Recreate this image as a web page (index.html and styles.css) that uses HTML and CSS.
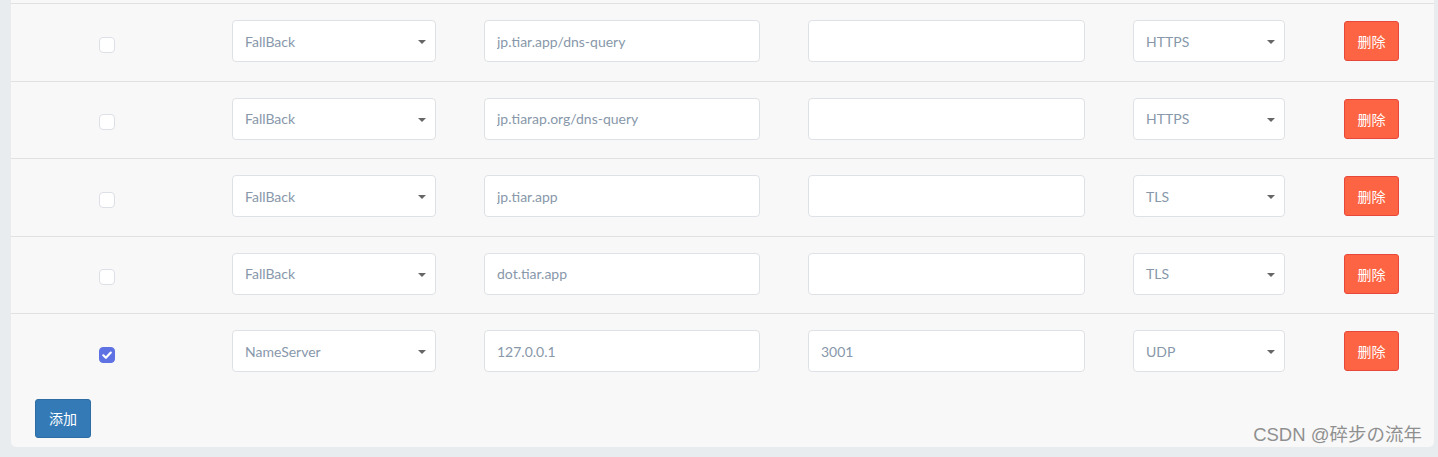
FILE: index.html
```html
<!DOCTYPE html>
<html lang="zh-CN">
<head>
<meta charset="utf-8">
<title>DNS</title>
<link rel="stylesheet" href="styles.css">
</head>
<body>
<div class="card">
  <div class="row">
    <div class="cell cell-check"><span class="check"></span></div>
    <div class="cell"><div class="select"><span>FallBack</span></div></div>
    <div class="cell"><input class="field" type="text" value="jp.tiar.app/dns-query"></div>
    <div class="cell"><input class="field" type="text" value=""></div>
    <div class="cell"><div class="select"><span>HTTPS</span></div></div>
    <div class="cell cell-btn"><button class="btn-del">删除</button></div>
  </div>
  <div class="row">
    <div class="cell cell-check"><span class="check"></span></div>
    <div class="cell"><div class="select"><span>FallBack</span></div></div>
    <div class="cell"><input class="field" type="text" value="jp.tiarap.org/dns-query"></div>
    <div class="cell"><input class="field" type="text" value=""></div>
    <div class="cell"><div class="select"><span>HTTPS</span></div></div>
    <div class="cell cell-btn"><button class="btn-del">删除</button></div>
  </div>
  <div class="row">
    <div class="cell cell-check"><span class="check"></span></div>
    <div class="cell"><div class="select"><span>FallBack</span></div></div>
    <div class="cell"><input class="field" type="text" value="jp.tiar.app"></div>
    <div class="cell"><input class="field" type="text" value=""></div>
    <div class="cell"><div class="select"><span>TLS</span></div></div>
    <div class="cell cell-btn"><button class="btn-del">删除</button></div>
  </div>
  <div class="row">
    <div class="cell cell-check"><span class="check"></span></div>
    <div class="cell"><div class="select"><span>FallBack</span></div></div>
    <div class="cell"><input class="field" type="text" value="dot.tiar.app"></div>
    <div class="cell"><input class="field" type="text" value=""></div>
    <div class="cell"><div class="select"><span>TLS</span></div></div>
    <div class="cell cell-btn"><button class="btn-del">删除</button></div>
  </div>
  <div class="row">
    <div class="cell cell-check"><span class="check checked"><svg viewBox="0 0 16 16" width="16" height="16"><path d="M4.3 8.3 L6.9 10.8 L11.8 5.6" fill="none" stroke="#fff" stroke-width="2.2" stroke-linecap="round" stroke-linejoin="round"/></svg></span></div>
    <div class="cell"><div class="select"><span>NameServer</span></div></div>
    <div class="cell"><input class="field" type="text" value="127.0.0.1"></div>
    <div class="cell"><input class="field" type="text" value="3001"></div>
    <div class="cell"><div class="select"><span>UDP</span></div></div>
    <div class="cell cell-btn"><button class="btn-del">删除</button></div>
  </div>
  <div class="footer">
    <button class="btn-add">添加</button>
  </div>
</div>
<div class="watermark">CSDN @碎步の流年</div>
</body>
</html>
```

FILE: styles.css
```css
html, body {
  margin: 0;
  padding: 0;
}
body {
  background: #e9ecef;
  width: 1438px;
  height: 457px;
  overflow: hidden;
  position: relative;
  font-family: "Lato", "Noto Sans CJK SC", sans-serif;
}
.card {
  margin-left: 11px;
  width: 1423px;
  background: #f8f8f8;
  padding-top: 3px;
  padding-bottom: 9px;
  border-radius: 0 0 5px 5px;
  box-sizing: border-box;
}
.row {
  display: grid;
  grid-template-columns: 197px 252px 324px 325px 200px 125px;
  height: 77.5px;
  box-sizing: border-box;
  border-top: 1px solid #e1e1e1;
  align-items: center;
  padding-bottom: 2px;
}
.cell {
  padding: 0 24px;
  display: flex;
  align-items: center;
}
.cell-check {
  justify-content: center;
  padding-right: 29px;
}
.cell-btn {
  justify-content: center;
}
.check {
  width: 16px;
  height: 16px;
  box-sizing: border-box;
  border: 1px solid #dde0e6;
  background: #fff;
  border-radius: 4px;
  margin-top: 7px;
  display: block;
}
.check.checked {
  background: #5e72e4;
  border-color: #5e72e4;
  position: relative;
}
.check.checked svg {
  position: absolute;
  left: -1px;
  top: -1px;
}
.field, .select {
  width: 100%;
  height: 42px;
  box-sizing: border-box;
  border: 1px solid #dee2e6;
  border-radius: 4px;
  background: #fff;
  color: #8898aa;
  font-family: "Lato", sans-serif;
  font-size: 14px;
  padding: 0 12px;
  outline: none;
}
.select {
  display: flex;
  align-items: center;
  position: relative;
}
.select::after {
  content: "";
  position: absolute;
  right: 9px;
  top: 19px;
  border-left: 4px solid transparent;
  border-right: 4px solid transparent;
  border-top: 4px solid #666;
}
.btn-del {
  width: 55px;
  height: 40px;
  background: #fd6443;
  border: 1px solid #e8483a;
  border-radius: 3px;
  color: #fff;
  font-family: "Noto Sans CJK SC", sans-serif;
  font-size: 14px;
  padding: 0;
}
.footer {
  padding: 8px 0 0 24px;
}
.btn-add {
  width: 56px;
  height: 39px;
  background: #337ab7;
  border: 1px solid #2e6da4;
  border-radius: 3px;
  color: #fff;
  font-family: "Noto Sans CJK SC", sans-serif;
  font-size: 14px;
  padding: 0;
  display: block;
}
.watermark {
  position: absolute;
  right: 16px;
  top: 423px;
  font-family: "Liberation Sans", "Noto Sans CJK SC", sans-serif;
  font-size: 18.5px;
  line-height: 24px;
  color: #8f8f8f;
  text-shadow: 0 0 1px rgba(255,255,255,0.6);
}
```
